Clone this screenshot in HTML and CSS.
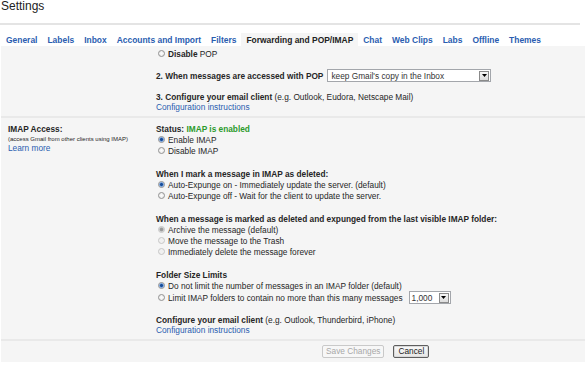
FILE: index.html
```html
<!DOCTYPE html>
<html lang="en">
<head>
    <meta charset="UTF-8">
    <meta name="viewport" content="width=device-width, initial-scale=1.0">
    <title>Settings - Forwarding and POP/IMAP</title>
    <link rel="stylesheet" href="styles.css">
</head>
<body>
    <div class="page-head">
        <h1 class="page-title">Settings</h1>
    </div>

    <nav class="tabs">
        <a class="tab" href="#">General</a>
        <a class="tab" href="#">Labels</a>
        <a class="tab" href="#">Inbox</a>
        <a class="tab" href="#">Accounts and Import</a>
        <a class="tab" href="#">Filters</a>
        <span class="tab active">Forwarding and POP/IMAP</span>
        <a class="tab" href="#">Chat</a>
        <a class="tab" href="#">Web Clips</a>
        <a class="tab" href="#">Labs</a>
        <a class="tab" href="#">Offline</a>
        <a class="tab" href="#">Themes</a>
    </nav>

    <div class="panel">
        <!-- POP -->
        <div class="section pop">
            <div class="label-col"></div>
            <div class="field-col">
                <label class="line">
                    <input type="radio" class="radio" name="pop"><b>Disable</b>&nbsp;POP
                </label>

                <div class="line select-row gap-sm">
                    <b>2. When messages are accessed with POP</b>
                    <span class="select wide">
                        <span class="select-value">keep Gmail's copy in the Inbox</span>
                        <span class="select-btn"><svg width="5" height="3" viewBox="0 0 5 3"><polygon points="0,0 5,0 2.5,3" fill="#000"/></svg></span>
                    </span>
                </div>

                <div class="text-line gap-sm"><b>3. Configure your email client</b> (e.g. Outlook, Eudora, Netscape Mail)</div>
                <div class="text-line"><a href="#" class="link">Configuration instructions</a></div>
            </div>
        </div>

        <!-- IMAP -->
        <div class="section imap">
            <div class="label-col">
                <div class="line"><b>IMAP Access:</b></div>
                <div class="hint">(access Gmail from other clients using IMAP)</div>
                <div class="text-line"><a href="#" class="link">Learn more</a></div>
            </div>
            <div class="field-col">
                <div class="line"><b>Status:</b>&nbsp;<b class="ok">IMAP is enabled</b></div>
                <label class="line"><input type="radio" class="radio" name="imap" checked>Enable IMAP</label>
                <label class="line"><input type="radio" class="radio" name="imap">Disable IMAP</label>

                <div class="group">
                    <div class="line"><b>When I mark a message in IMAP as deleted:</b></div>
                    <label class="line"><input type="radio" class="radio" name="expunge" checked>Auto-Expunge on - Immediately update the server. (default)</label>
                    <label class="line"><input type="radio" class="radio" name="expunge">Auto-Expunge off - Wait for the client to update the server.</label>
                </div>

                <div class="group">
                    <div class="line"><b>When a message is marked as deleted and expunged from the last visible IMAP folder:</b></div>
                    <label class="line"><input type="radio" class="radio" name="expunged" checked disabled>Archive the message (default)</label>
                    <label class="line"><input type="radio" class="radio" name="expunged" disabled>Move the message to the Trash</label>
                    <label class="line"><input type="radio" class="radio" name="expunged" disabled>Immediately delete the message forever</label>
                </div>

                <div class="group">
                    <div class="line"><b>Folder Size Limits</b></div>
                    <label class="line"><input type="radio" class="radio" name="limit" checked>Do not limit the number of messages in an IMAP folder (default)</label>
                    <div class="line select-row">
                        <input type="radio" class="radio" name="limit">Limit IMAP folders to contain no more than this many messages
                        <span class="select small">
                            <span class="select-value">1,000</span>
                            <span class="select-btn"><svg width="5" height="3" viewBox="0 0 5 3"><polygon points="0,0 5,0 2.5,3" fill="#000"/></svg></span>
                        </span>
                    </div>
                </div>

                <div class="text-line gap-md"><b>Configure your email client</b> (e.g. Outlook, Thunderbird, iPhone)</div>
                <div class="text-line"><a href="#" class="link">Configuration instructions</a></div>
            </div>
        </div>

        <div class="actions">
            <button class="btn" disabled>Save Changes</button>
            <button class="btn btn-default">Cancel</button>
        </div>
    </div>
</body>
</html>
```

FILE: styles.css
```css
:root {
    --panel: #f5f5f5;
    --rule: #e9e9e9;
    --text: #262626;
    --link: #2a5db0;
    --green: #2b9a2b;
}

* {
    margin: 0;
    padding: 0;
    box-sizing: border-box;
}

body {
    font-family: "Liberation Sans", Arial, sans-serif;
    font-size: 8.3px;
    color: var(--text);
    background: #fff;
    width: 586px;
    height: 365px;
    overflow: hidden;
}

b {
    font-weight: bold;
}

/* Header */
.page-head {
    width: 580px;
    height: 25px;
    border-bottom: 2px solid #e4e4e4;
}

.page-title {
    font-size: 12px;
    line-height: 12px;
    font-weight: normal;
    padding-left: 1px;
    color: #222;
}

/* Tabs */
.tabs {
    display: flex;
    margin-top: 8px;
    padding-left: 1px;
}

.tab {
    height: 13px;
    padding: 2px 5px 0;
    font-size: 8.45px;
    line-height: 11px;
    font-weight: bold;
    color: var(--link);
    text-decoration: none;
    white-space: nowrap;
}

.tab.active {
    background: var(--panel);
    color: #222;
}

/* Panel */
.panel {
    margin: 0 1px;
    background: var(--panel);
    height: 316px;
}

.section {
    display: grid;
    grid-template-columns: 155px 1fr;
}

.section.pop {
    padding: 2px 0 4px;
}

.section.imap {
    border-top: 2px solid var(--rule);
    padding: 5px 0 3.5px;
}

.label-col {
    padding-left: 7px;
}

.line {
    display: flex;
    align-items: center;
    height: 11px;
    white-space: nowrap;
}

.text-line {
    height: 10px;
    line-height: 10px;
    white-space: nowrap;
}

.hint {
    font-size: 6px;
    height: 9px;
    line-height: 9px;
    padding-top: 0.5px;
    white-space: nowrap;
}

.gap-sm {
    margin-top: 10px;
}

.gap-md {
    margin-top: 11px;
}

.group {
    margin-top: 12px;
}

.ok {
    color: var(--green);
}

.link {
    color: var(--link);
    text-decoration: none;
}

/* Radios */
.radio {
    appearance: none;
    -webkit-appearance: none;
    flex-shrink: 0;
    width: 7px;
    height: 7px;
    margin: 0 3px 0 2px;
    border: 1px solid #929292;
    border-radius: 50%;
    background: radial-gradient(circle, #fdfdfd 0, #e4e4e4 100%);
}

.radio:checked {
    background: radial-gradient(circle, #1b4d96 0 1px, #5a90dc 1.8px, #d8e6f8 2.6px, #eeeeee 3.5px);
}

.radio:disabled {
    border-color: #c6c6c6;
    background: #f0f0f0;
}

.radio:disabled:checked {
    background: radial-gradient(circle, #9a9a9a 0 1.3px, #cfcfcf 2.2px, #f0f0f0 3px);
}

/* Selects */
.select-row {
    height: 13px;
}

.select {
    display: inline-flex;
    align-items: center;
    height: 13px;
    margin-left: 4px;
    padding-left: 3px;
    border: 1px solid #a3a6ab;
    background: #fff;
}

.select.wide {
    width: 164px;
}

.select.small {
    width: 42px;
    margin-left: 6px;
    padding-left: 2px;
}

.select-value {
    flex: 1;
    color: #333;
}

.select-btn {
    display: flex;
    align-items: center;
    justify-content: center;
    width: 10px;
    height: 10px;
    margin-right: 1px;
    border: 1px solid #8a8a8a;
    background: linear-gradient(#f7f7f7, #dcdcdc);
}

/* Buttons */
.actions {
    display: flex;
    gap: 9px;
    border-top: 2px solid var(--rule);
    padding: 4.5px 0 4px 321px;
}

.btn {
    height: 13px;
    padding: 0 3px;
    font-family: inherit;
    font-size: 8.3px;
    line-height: 11px;
    color: #222;
    border: 1px solid #b0b0b0;
    border-radius: 2px;
    background: linear-gradient(#fafafa, #e6e6e6);
}

.btn:disabled {
    color: #a8a8a8;
    border-color: #c9c9c9;
    background: #f7f7f7;
}

.btn-default {
    padding: 0 4px;
    border-color: #5e5e5e;
    box-shadow: inset 0 0 0 1px #dadada;
}
```
